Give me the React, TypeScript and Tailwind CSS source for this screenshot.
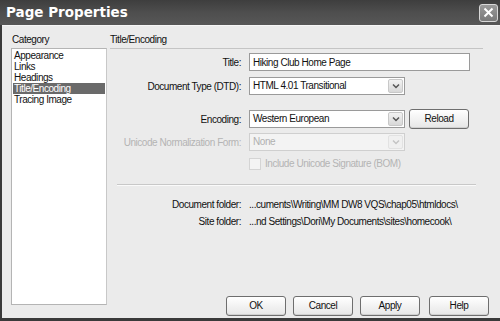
import { ReactNode } from 'react';

const FONT = { fontFamily: '"Liberation Sans", Arial, sans-serif' };

const categories = ['Appearance', 'Links', 'Headings', 'Title/Encoding', 'Tracing Image'];

function Chevron({ disabled = false }: { disabled?: boolean }) {
    return (
        <div
            className={`w-[15px] h-[14px] my-[1px] mr-[1px] rounded-[2px] flex items-center justify-center border ${
                disabled ? 'border-[#e2e2e2] bg-[#f0f0f0]' : 'border-[#c8c8c8] bg-gradient-to-b from-[#f2f2f2] to-[#d8d8d8]'
            }`}
        >
            <svg width="8" height="6" viewBox="0 0 8 6">
                <path d="M1 1.5 L4 4.5 L7 1.5" fill="none" stroke={disabled ? '#c4c4c4' : '#555'} strokeWidth="1.5" />
            </svg>
        </div>
    );
}

function Select({ value, width, disabled = false }: { value: string; width: string; disabled?: boolean }) {
    return (
        <div
            className={`${width} h-[18px] flex items-stretch border ${
                disabled ? 'border-[#cfcfcf] bg-[#f3f3f3] text-[#b0b0b0]' : 'border-[#9a9a9a] bg-white text-[#111]'
            }`}
        >
            <div className="flex-1 pl-[3px] flex items-center leading-none whitespace-nowrap">{value}</div>
            <Chevron disabled={disabled} />
        </div>
    );
}

function Button({ children, className = '' }: { children: ReactNode; className?: string }) {
    return (
        <button
            className={`h-[20px] w-[60px] rounded-[3px] border border-[#6e6e6e] bg-gradient-to-b from-white to-[#e6e6e6] text-[#111] leading-none shadow-[inset_0_-1px_0_#d0d0d0] ${className}`}
        >
            {children}
        </button>
    );
}

function Row({ label, children, muted = false, className = '' }: { label: string; children: ReactNode; muted?: boolean; className?: string }) {
    return (
        <div className={`flex items-center whitespace-nowrap ${className}`}>
            <div className={`w-[131px] text-right ${muted ? 'text-[#b4b4b4]' : 'text-[#111]'}`}>{label}</div>
            <div className="ml-[8px] flex items-center">{children}</div>
        </div>
    );
}

export default function App() {
    return (
        <div className="w-[500px] h-[321px] flex flex-col bg-[#3a3a3a] text-[10px] tracking-[-0.45px] overflow-hidden" style={FONT}>
            {/* title bar */}
            <div className="h-[25px] shrink-0 flex items-center justify-between bg-gradient-to-b from-[#3e3e3e] via-[#4e4e4e] to-[#575757] pl-[6px] pr-[2px]">
                <span className="text-white font-bold text-[13.5px] tracking-normal" style={{ fontFamily: '"DejaVu Sans", "Liberation Sans", sans-serif' }}>
                    Page Properties
                </span>
                <div className="w-[19px] h-[18px] rounded-[3px] border border-[#d8d8d8] bg-gradient-to-b from-[#9a9a9a] to-[#7a7a7a] flex items-center justify-center">
                    <svg width="11" height="11" viewBox="0 0 11 11">
                        <path d="M1.5 1.5 L9.5 9.5 M9.5 1.5 L1.5 9.5" stroke="white" strokeWidth="2" />
                    </svg>
                </div>
            </div>

            {/* body */}
            <div className="flex-1 flex ml-[2px] mb-[3px] bg-[#ebebeb] border-t border-[#f6f6f6]">
                {/* category column */}
                <div className="w-[106px] shrink-0 pl-[9px] pt-[7px] flex flex-col whitespace-nowrap">
                    <div className="text-[#111] h-[14px] leading-[14px] pl-[1px]">Category</div>
                    <div className="mt-[1px] w-[96px] h-[257px] bg-white border border-[#b4b4b4] border-r-[#c8c8c8] pt-[1px] px-[1px]">
                        {categories.map((c) => (
                            <div
                                key={c}
                                className={`h-[11px] leading-[11px] pl-[1px] ${c === 'Title/Encoding' ? 'bg-[#6a6a6a] text-white' : 'text-[#111]'}`}
                            >
                                {c}
                            </div>
                        ))}
                    </div>
                </div>

                {/* settings column */}
                <div className="flex-1 pl-[2px] pr-[11px] pt-[7px] flex flex-col">
                    <div className="text-[#111] h-[14px] leading-[14px]">Title/Encoding</div>
                    <div className="border-t border-[#c4c4c4] mt-[1px] mr-[6px]" />

                    <Row label="Title:" className="mt-[4px] h-[18px]">
                        <div className="w-[221px] h-[18px] bg-white border border-[#9a9a9a] flex items-center pl-[3px] text-[#111]">
                            Hiking Club Home Page
                        </div>
                    </Row>
                    <Row label="Document Type (DTD):" className="mt-[6px] h-[18px]">
                        <Select value="HTML 4.01 Transitional" width="w-[156px]" />
                    </Row>
                    <Row label="Encoding:" className="mt-[15px] h-[18px]">
                        <Select value="Western European" width="w-[156px]" />
                        <Button className="ml-[4px] h-[19px]">Reload</Button>
                    </Row>
                    <Row label="Unicode Normalization Form:" muted className="mt-[5px] h-[18px]">
                        <Select value="None" width="w-[156px]" disabled />
                    </Row>
                    <div className="mt-[6px] h-[13px] ml-[139px] flex items-center text-[#b4b4b4] whitespace-nowrap">
                        <div className="w-[12px] h-[12px] border border-[#d4d4d4] bg-[#f4f4f4]" />
                        <span className="ml-[4px]">Include Unicode Signature (BOM)</span>
                    </div>

                    <div className="mt-[14px] ml-[7px] mr-[13px] border-t border-[#c8c8c8] shadow-[0_1px_0_#fafafa]" />

                    <Row label="Document folder:" className="mt-[12px] h-[14px]">
                        <span className="text-[#111]">...cuments\Writing\MM DW8 VQS\chap05\htmldocs\</span>
                    </Row>
                    <Row label="Site folder:" className="mt-[3px] h-[14px]">
                        <span className="text-[#111]">...nd Settings\Dori\My Documents\sites\homecook\</span>
                    </Row>

                    <div className="mt-auto mb-[2px] flex justify-end gap-[7px]">
                        <Button>OK</Button>
                        <Button>Cancel</Button>
                        <Button>Apply</Button>
                        <Button className="ml-[2px]">Help</Button>
                    </div>
                </div>
            </div>
        </div>
    );
}
